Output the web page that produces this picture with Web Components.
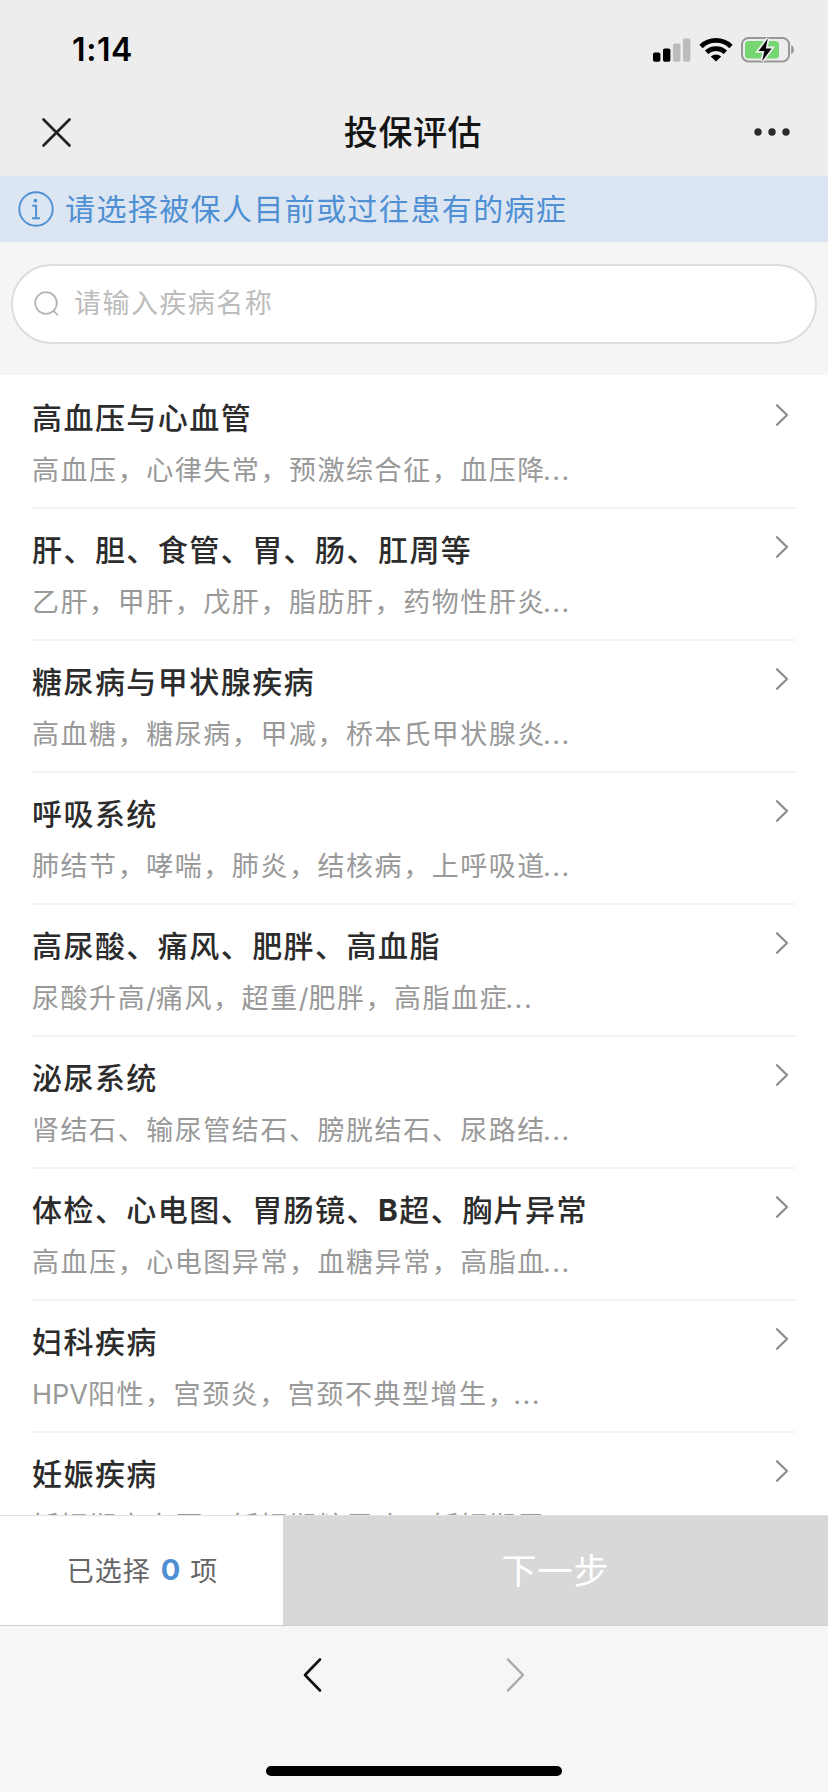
<!DOCTYPE html>
<html lang="zh-CN">
<head>
<meta charset="UTF-8">
<meta name="viewport" content="width=device-width, initial-scale=1">
<title>投保评估</title>
<style>
  html, body {
    margin: 0;
    height: 100%;
    overflow: hidden;
  }
  body {
    font-family: Inter, "Noto Sans CJK SC", sans-serif;
    background: #f6f6f6;
  }
</style>
</head>
<body>
<assess-app></assess-app>

<script>
  class BaseElement extends HTMLElement {
    connectedCallback() {
      if (this.shadowRoot) return;
      const template = document.createElement('template');
      template.innerHTML = this.render();
      this.attachShadow({ mode: 'open' }).append(template.content.cloneNode(true));
    }

    render() {
      return '';
    }
  }

  class StatusBar extends BaseElement {
    render() {
      return `
        <style>
          :host {
            display: flex;
            align-items: center;
            justify-content: space-between;
            flex: none;
            box-sizing: border-box;
            height: 88px;
            padding: 12px 33px 0 72px;
            color: #000;
          }
          .time {
            font-size: 32px;
            font-weight: 600;
            line-height: 38px;
            letter-spacing: .6px;
          }
          .icons {
            display: flex;
            align-items: center;
            gap: 8px;
          }
          svg { display: block; }
        </style>
        <span class="time"><slot></slot></span>
        <div class="icons">
          <svg width="38" height="26" viewBox="0 0 38 26">
            <rect x="0" y="15.5" width="7.4" height="9.2" rx="1.8"/>
            <rect x="10" y="11.5" width="7.4" height="13.2" rx="1.8"/>
            <rect x="20" y="6.5" width="7.4" height="18.2" rx="1.8" fill="#bcbcbc"/>
            <rect x="30" y="1.5" width="7.4" height="23.2" rx="1.8" fill="#bcbcbc"/>
          </svg>
          <svg width="34" height="26" viewBox="0 0 34 26">
            <g fill="none" stroke="#000" stroke-width="4.8">
              <path d="M2 9.5a21.5 21.5 0 0 1 30 0"/>
              <path d="M7.6 15.3a13.6 13.6 0 0 1 18.8 0"/>
            </g>
            <path d="M17 24.6l-5.2-5.1a7.6 7.6 0 0 1 10.4 0z"/>
          </svg>
          <svg width="54" height="28" viewBox="0 0 54 28">
            <rect x="1" y="2" width="47" height="23.4" rx="6.5" fill="none" stroke="#979797" stroke-width="2"/>
            <path d="M50.2 9.3c3.6 1 3.6 7.8 0 8.8z" fill="#979797"/>
            <rect x="4" y="5" width="34" height="17.4" rx="3.5" fill="#76d672"/>
            <path d="M26.8 2.6L17.6 15h5.8L21.2 25 30.6 12.4h-5.8z" fill="#000" stroke="#ededed" stroke-width="3.6" paint-order="stroke"/>
          </svg>
        </div>
      `;
    }
  }

  class NavHeader extends BaseElement {
    render() {
      return `
        <style>
          :host {
            display: flex;
            align-items: center;
            justify-content: space-between;
            flex: none;
            box-sizing: border-box;
            height: 88px;
            padding: 0 36px 0 41px;
          }
          h1 {
            margin: 1px 0 0;
            color: #151515;
            font-size: 34px;
            font-weight: 500;
            line-height: 48px;
            letter-spacing: .6px;
          }
          svg { display: block; }
        </style>
        <svg width="31" height="31" viewBox="0 0 31 31" fill="none" stroke="#222" stroke-width="2.7" stroke-linecap="round">
          <path d="M2.5 2.5l26 26M28.5 2.5l-26 26"/>
        </svg>
        <h1><slot></slot></h1>
        <svg width="38" height="8" viewBox="0 0 38 8" fill="#2b2b2b">
          <circle cx="4" cy="4" r="3.7"/>
          <circle cx="18" cy="4" r="3.7"/>
          <circle cx="32" cy="4" r="3.7"/>
        </svg>
      `;
    }
  }

  class TipBanner extends BaseElement {
    render() {
      return `
        <style>
          :host {
            display: flex;
            align-items: center;
            gap: 11px;
            flex: none;
            box-sizing: border-box;
            height: 66px;
            padding-left: 18px;
            background: #dbe6f2;
            color: #4f8fd3;
            font-size: 30px;
            line-height: 42px;
            letter-spacing: 1.4px;
          }
          span { margin-top: -1px; }
          svg { display: block; }
        </style>
        <svg width="36" height="36" viewBox="0 0 36 36" fill="none" stroke="#4f8fd3" stroke-width="1.9">
          <circle cx="18" cy="18" r="16.7"/>
          <circle cx="17.4" cy="9.6" r="1.9" fill="#4f8fd3" stroke="none"/>
          <path d="M14.2 14.7h3.9v12.2M14 27.2h8"/>
        </svg>
        <span><slot></slot></span>
      `;
    }
  }

  class SearchBox extends BaseElement {
    render() {
      return `
        <style>
          :host {
            display: block;
            flex: none;
            box-sizing: border-box;
            height: 133px;
            padding: 22px 11px 0;
            background: #f5f5f5;
          }
          .field {
            display: flex;
            align-items: center;
            gap: 14px;
            box-sizing: border-box;
            height: 80px;
            padding-left: 21px;
            border: 2px solid #dcdcdc;
            border-radius: 40px;
            background: #fff;
            color: #bcbcbc;
            font-size: 27px;
            line-height: 38px;
            letter-spacing: 1.45px;
          }
          svg { display: block; }
        </style>
        <div class="field">
          <svg width="26" height="26" viewBox="0 0 26 26" fill="none" stroke="#b5b5b5" stroke-width="1.8" stroke-linecap="round">
            <circle cx="12" cy="12" r="10.8"/>
            <path d="M19.5 19.8l4 4"/>
          </svg>
          <span><slot></slot></span>
        </div>
      `;
    }
  }

  class DiseaseItem extends BaseElement {
    render() {
      return `
        <style>
          :host {
            display: flex;
            align-items: flex-start;
            justify-content: space-between;
            box-sizing: border-box;
            height: 132px;
            padding-top: 20px;
            border-bottom: 2px solid #f4f4f4;
          }
          .title {
            color: #2c2c2c;
            font-size: 30px;
            font-weight: 500;
            line-height: 42px;
            letter-spacing: 1.45px;
          }
          .desc {
            margin-top: 13px;
            color: #999;
            font-size: 27px;
            line-height: 38px;
            letter-spacing: 1.55px;
            white-space: nowrap;
          }
          /* latin runs sit tighter than the han text around them */
          ::slotted(.latin) { letter-spacing: 0; }
          ::slotted(.more) { margin-left: -3px; }
          svg {
            display: block;
            margin: 6px 7px 0 0;
          }
        </style>
        <div>
          <div class="title"><slot name="title"></slot></div>
          <div class="desc"><slot></slot></div>
        </div>
        <svg width="14" height="24" viewBox="0 0 14 24" fill="none" stroke="#8b8b8b" stroke-width="2.2" stroke-linecap="round" stroke-linejoin="round">
          <path d="M2 2.2L12 12 2 21.8"/>
        </svg>
      `;
    }
  }

  class DiseaseList extends BaseElement {
    #items = [
      ['高血压与心血管', '高血压，心律失常，预激综合征，血压降...'],
      ['肝、胆、食管、胃、肠、肛周等', '乙肝，甲肝，戊肝，脂肪肝，药物性肝炎...'],
      ['糖尿病与甲状腺疾病', '高血糖，糖尿病，甲减，桥本氏甲状腺炎...'],
      ['呼吸系统', '肺结节，哮喘，肺炎，结核病，上呼吸道...'],
      ['高尿酸、痛风、肥胖、高血脂', '尿酸升高/痛风，超重/肥胖，高脂血症...'],
      ['泌尿系统', '肾结石、输尿管结石、膀胱结石、尿路结...'],
      ['体检、心电图、胃肠镜、<b>B</b>超、胸片异常', '高血压，心电图异常，血糖异常，高脂血...'],
      ['妇科疾病', 'HPV阳性，宫颈炎，宫颈不典型增生，...'],
      ['妊娠疾病', '妊娠期高血压，妊娠期糖尿病，妊娠期甲...'],
    ];

    #formatDesc(desc) {
      return desc
        .replace(/[A-Z]+|\//g, '<i class="latin">$&</i>')
        .replace('...', '<i class="more">...</i>');
    }

    render() {
      return `
        <style>
          :host {
            display: block;
            flex: 1;
            min-height: 0;
            overflow: hidden;
            padding: 2px 32px 0;
            background: #fff;
          }
          b { font-weight: 700; }
          i { font-style: normal; }
        </style>
        ${this.#items
          .map(([title, desc]) => `<disease-item><span slot="title">${title}</span>${this.#formatDesc(desc)}</disease-item>`)
          .join('')}
      `;
    }
  }

  class ActionBar extends BaseElement {
    render() {
      return `
        <style>
          :host {
            display: flex;
            flex: none;
            box-sizing: border-box;
            height: 111px;
            border-top: 1px solid #e2e2e2;
            border-bottom: 1px solid #cfcfcf;
          }
          .count {
            display: flex;
            align-items: center;
            justify-content: center;
            gap: 10px;
            box-sizing: border-box;
            width: 283px;
            padding: 0 0 2px 2px;
            background: #fff;
            color: #666;
            font-size: 27px;
            letter-spacing: 1px;
          }
          .count b {
            color: #4f8fd3;
            font-size: 29px;
            font-weight: 700;
            letter-spacing: 0;
          }
          .next {
            flex: 1;
            border: 0;
            padding: 0 0 5px;
            background: #d8d8d8;
            color: #fff;
            font: inherit;
            font-size: 35px;
            letter-spacing: 1px;
          }
        </style>
        <div class="count"><span>已选择</span><b>${this.getAttribute('count')}</b><span>项</span></div>
        <button class="next">下一步</button>
      `;
    }
  }

  class BrowserBar extends BaseElement {
    render() {
      return `
        <style>
          :host {
            display: flex;
            flex-direction: column;
            align-items: center;
            justify-content: space-between;
            flex: none;
            box-sizing: border-box;
            height: 166px;
            padding: 31px 0 16px;
            background: #f6f6f6;
          }
          .arrows {
            display: flex;
            gap: 182px;
          }
          svg { display: block; }
          .home {
            width: 296px;
            height: 10px;
            border-radius: 5px;
            background: #000;
          }
        </style>
        <div class="arrows">
          <svg width="20" height="36" viewBox="0 0 20 36" fill="none" stroke="#111" stroke-width="2.6" stroke-linecap="round" stroke-linejoin="round">
            <path d="M17 2.5L2 18l15 15.5"/>
          </svg>
          <svg width="20" height="36" viewBox="0 0 20 36" fill="none" stroke="#a9a9a9" stroke-width="2.4" stroke-linecap="round" stroke-linejoin="round">
            <path d="M3 2.5L18 18 3 33.5"/>
          </svg>
        </div>
        <div class="home"></div>
      `;
    }
  }

  class AssessApp extends BaseElement {
    render() {
      return `
        <style>
          :host {
            display: flex;
            flex-direction: column;
            height: 100vh;
          }
          header {
            flex: none;
            background: #ededed;
          }
        </style>
        <header>
          <status-bar>1:14</status-bar>
          <nav-header>投保评估</nav-header>
        </header>
        <tip-banner>请选择被保人目前或过往患有的病症</tip-banner>
        <search-box>请输入疾病名称</search-box>
        <disease-list></disease-list>
        <action-bar count="0"></action-bar>
        <browser-bar></browser-bar>
      `;
    }
  }

  customElements.define('status-bar', StatusBar);
  customElements.define('nav-header', NavHeader);
  customElements.define('tip-banner', TipBanner);
  customElements.define('search-box', SearchBox);
  customElements.define('disease-item', DiseaseItem);
  customElements.define('disease-list', DiseaseList);
  customElements.define('action-bar', ActionBar);
  customElements.define('browser-bar', BrowserBar);
  customElements.define('assess-app', AssessApp);
</script>
</body>
</html>
